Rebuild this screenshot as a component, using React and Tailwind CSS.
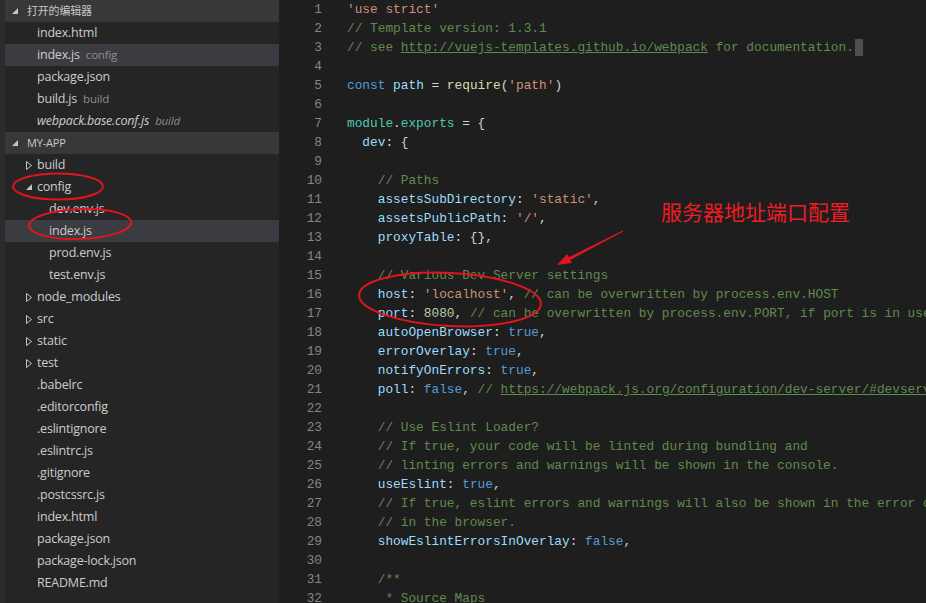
import React from "react";

const C = {
  s: "text-[#ce9178]",
  c: "text-[#608b4e]",
  u: "text-[#608b4e] underline",
  k: "text-[#569cd6]",
  v: "text-[#9cdcfe]",
  f: "text-[#dcdcaa]",
  m: "text-[#4ec9b0]",
  n: "text-[#b5cea8]",
  p: "text-[#d4d4d4]",
};

const code = [
  [["'use strict'", "s"]],
  [["// Template version: 1.3.1", "c"]],
  [["// see ", "c"], ["http://vuejs-templates.github.io/webpack", "u"], [" for documentation.", "c"], ["CURSOR", "x"]],
  [],
  [["const", "k"], [" ", "p"], ["path", "v"], [" = ", "p"], ["require", "f"], ["(", "p"], ["'path'", "s"], [")", "p"]],
  [],
  [["module", "m"], [".", "p"], ["exports", "m"], [" = {", "p"]],
  [["  ", "p"], ["dev", "v"], [": {", "p"]],
  [],
  [["    ", "p"], ["// Paths", "c"]],
  [["    ", "p"], ["assetsSubDirectory", "v"], [": ", "p"], ["'static'", "s"], [",", "p"]],
  [["    ", "p"], ["assetsPublicPath", "v"], [": ", "p"], ["'/'", "s"], [",", "p"]],
  [["    ", "p"], ["proxyTable", "v"], [": {},", "p"]],
  [],
  [["    ", "p"], ["// Various Dev Server settings", "c"]],
  [["    ", "p"], ["host", "v"], [": ", "p"], ["'localhost'", "s"], [", ", "p"], ["// can be overwritten by process.env.HOST", "c"]],
  [["    ", "p"], ["port", "v"], [": ", "p"], ["8080", "n"], [", ", "p"], ["// can be overwritten by process.env.PORT, if port is in use, a free one will be determined", "c"]],
  [["    ", "p"], ["autoOpenBrowser", "v"], [": ", "p"], ["true", "k"], [",", "p"]],
  [["    ", "p"], ["errorOverlay", "v"], [": ", "p"], ["true", "k"], [",", "p"]],
  [["    ", "p"], ["notifyOnErrors", "v"], [": ", "p"], ["true", "k"], [",", "p"]],
  [["    ", "p"], ["poll", "v"], [": ", "p"], ["false", "k"], [", ", "p"], ["// ", "c"], ["https://webpack.js.org/configuration/dev-server/#devserver-watchoptions-", "u"]],
  [],
  [["    ", "p"], ["// Use Eslint Loader?", "c"]],
  [["    ", "p"], ["// If true, your code will be linted during bundling and", "c"]],
  [["    ", "p"], ["// linting errors and warnings will be shown in the console.", "c"]],
  [["    ", "p"], ["useEslint", "v"], [": ", "p"], ["true", "k"], [",", "p"]],
  [["    ", "p"], ["// If true, eslint errors and warnings will also be shown in the error overlay", "c"]],
  [["    ", "p"], ["// in the browser.", "c"]],
  [["    ", "p"], ["showEslintErrorsInOverlay", "v"], [": ", "p"], ["false", "k"], [",", "p"]],
  [],
  [["    ", "p"], ["/**", "c"]],
  [["     ", "p"], ["* Source Maps", "c"]],
];

function Expanded() {
  return (
    <svg width="6" height="6" viewBox="0 0 6 6" className="shrink-0">
      <polygon points="6,0 6,6 0,6" fill="#c5c5c5" />
    </svg>
  );
}
function Collapsed() {
  return (
    <svg width="6" height="9" viewBox="0 0 6 9" className="shrink-0">
      <polygon points="0.5,0.5 5.5,4.5 0.5,8.5" fill="none" stroke="#c5c5c5" strokeWidth="1" />
    </svg>
  );
}

function Header({ label }) {
  return (
    <div className="h-[22px] shrink-0 flex items-center bg-[#383838] pl-[7px] gap-[9px]">
      <Expanded />
      <span className="text-[11px] text-[#c8c8c8]">{label}</span>
    </div>
  );
}

function Row({ name, desc, italic, selected, pad = "pl-[32px]", twisty }) {
  return (
    <div className={`h-[22px] shrink-0 flex items-center ${pad} ${selected ? "bg-[#3b3b42]" : ""}`}>
      {twisty === "c" && <span className="w-[11px] -ml-[11px] flex items-center"><Collapsed /></span>}
      {twisty === "e" && <span className="w-[11px] -ml-[11px] flex items-center"><Expanded /></span>}
      <span className={`text-[12.5px] text-[#cccccc] ${italic ? "italic" : ""}`}>{name}</span>
      {desc && <span className={`ml-[6px] text-[11.5px] text-[#8e8e8e] ${italic ? "italic" : ""}`}>{desc}</span>}
    </div>
  );
}

export default function App() {
  return (
    <div
      className="relative w-[926px] h-[603px] overflow-hidden flex bg-[#1e1e1e]"
      style={{ fontFamily: '"Open Sans", "Noto Sans", "Noto Sans CJK SC", sans-serif' }}
    >
      <div className="w-[5px] shrink-0 bg-[#2c2c2c]" />
      <div className="w-[274px] shrink-0 bg-[#252526] flex flex-col tracking-[-0.2px]">
        <Header label="打开的编辑器" />
        <Row name="index.html" />
        <Row name="index.js" desc="config" selected />
        <Row name="package.json" />
        <Row name="build.js" desc="build" />
        <Row name="webpack.base.conf.js" desc="build" italic />
        <Header label="MY-APP" />
        <Row name="build" twisty="c" />
        <Row name="config" twisty="e" />
        <Row name="dev.env.js" pad="pl-[44px]" />
        <Row name="index.js" pad="pl-[44px]" selected />
        <Row name="prod.env.js" pad="pl-[44px]" />
        <Row name="test.env.js" pad="pl-[44px]" />
        <Row name="node_modules" twisty="c" />
        <Row name="src" twisty="c" />
        <Row name="static" twisty="c" />
        <Row name="test" twisty="c" />
        <Row name=".babelrc" />
        <Row name=".editorconfig" />
        <Row name=".eslintignore" />
        <Row name=".eslintrc.js" />
        <Row name=".gitignore" />
        <Row name=".postcssrc.js" />
        <Row name="index.html" />
        <Row name="package.json" />
        <Row name="package-lock.json" />
        <Row name="README.md" />
      </div>
      <div className="flex-1 flex overflow-hidden bg-[#1e1e1e]" style={{ fontFamily: '"Liberation Mono", "DejaVu Sans Mono", monospace' }}>
        <div className="w-[43px] shrink-0 flex flex-col items-end text-[12.8px] leading-[19px] text-[#858585]">
          {code.map((_, i) => (
            <div key={i} className="h-[19px] shrink-0">{i + 1}</div>
          ))}
        </div>
        <div className="flex-1 pl-[25px] flex flex-col text-[12.8px] leading-[19px] whitespace-pre overflow-hidden">
          {code.map((line, i) => (
            <div key={i} className="h-[19px] shrink-0 flex">
              {line.map(([t, k], j) =>
                k === "x" ? (
                  <span key={j} className="inline-block w-[8px] h-[17px] mt-[1px] ml-[1px] bg-[#4e4e4e]" />
                ) : (
                  <span key={j} className={C[k]}>{t}</span>
                )
              )}
            </div>
          ))}
        </div>
      </div>

      <div className="absolute left-[661px] top-[197px] text-[21px] leading-[28px] text-[#ee1c24]" style={{ fontFamily: '"Noto Sans CJK SC", sans-serif' }}>
        服务器地址端口配置
      </div>
      <svg className="absolute left-0 top-0 pointer-events-none" width="926" height="603" viewBox="0 0 926 603">
        <ellipse cx="58" cy="186.5" rx="45" ry="13" fill="none" stroke="#e3151c" strokeWidth="2" />
        <ellipse cx="80" cy="224" rx="51" ry="15" fill="none" stroke="#e3151c" strokeWidth="2" transform="rotate(-2 80 224)" />
        <ellipse cx="450" cy="299.5" rx="91" ry="26.5" fill="none" stroke="#e3151c" strokeWidth="2" transform="rotate(3 450 299.5)" />
        <polygon
          points="622.8,230.6 568.8,257.3 567.2,254.1 557,265 571.8,263.1 570.2,259.9 623.2,231.4"
          fill="#e3151c"
        />
      </svg>
    </div>
  );
}
